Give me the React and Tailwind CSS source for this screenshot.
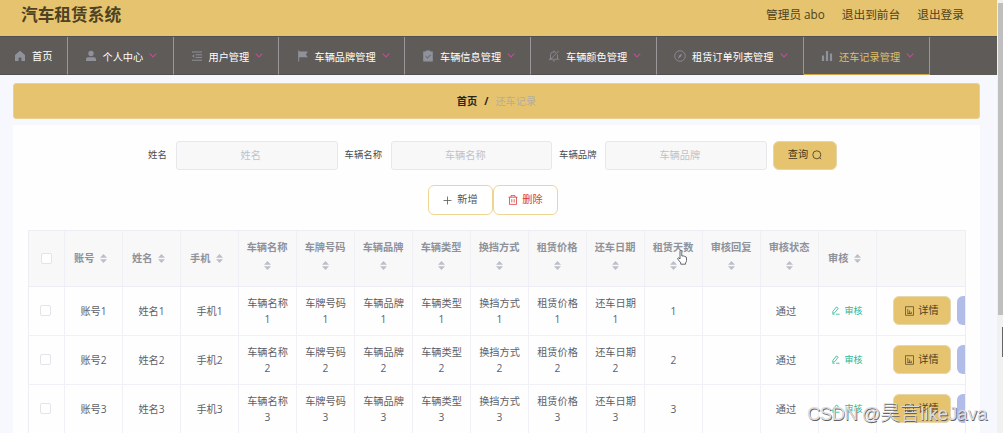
import clsx from 'clsx';

const navItems = [
    { label: '首页', icon: 'home', width: 'w-[68px]', pad: 'pl-[14px]', arrow: false },
    { label: '个人中心', icon: 'user', width: 'w-[106px]', pad: 'pl-[16.5px]', arrow: true },
    { label: '用户管理', icon: 'fold', width: 'w-[105px]', pad: 'pl-[16.5px]', arrow: true },
    { label: '车辆品牌管理', icon: 'flag', width: 'w-[126px]', pad: 'pl-[17.5px]', arrow: true },
    { label: '车辆信息管理', icon: 'claim', width: 'w-[126px]', pad: 'pl-[17px]', arrow: true },
    { label: '车辆颜色管理', icon: 'bell', width: 'w-[126px]', pad: 'pl-[17px]', arrow: true },
    { label: '租赁订单列表管理', icon: 'compass', width: 'w-[147px]', pad: 'pl-[17px]', arrow: true },
    { label: '还车记录管理', icon: 'data', width: 'w-[126px]', pad: 'pl-[17px]', arrow: true, active: true },
];

const searchFields = ['姓名', '车辆名称', '车辆品牌'];

const columns = [
    { title: '账号', field: true },
    { title: '姓名', field: true },
    { title: '手机', field: true },
    { title: '车辆名称', field: true, tall: true },
    { title: '车牌号码', field: true, tall: true },
    { title: '车辆品牌', field: true, tall: true },
    { title: '车辆类型', field: true, tall: true },
    { title: '换挡方式', field: true, tall: true },
    { title: '租赁价格', field: true, tall: true },
    { title: '还车日期', field: true, tall: true },
    { title: '租赁天数', tall: true },
    { title: '审核回复', tall: true },
    { title: '审核状态', tall: true },
    { title: '审核' },
];

const rows = [1, 2, 3];

const NavIcon = ({ name }) => (
    <svg className="w-3 h-3 shrink-0 text-[#8f929b]" viewBox="0 0 12 12" fill="none" stroke="currentColor" strokeWidth="1">
        {name === 'home' && <path fill="currentColor" stroke="none" d="M6 .8 11 5v6H7.4V7.4H4.6V11H1V5z" />}
        {name === 'user' && (
            <g fill="currentColor" stroke="none">
                <circle cx="6" cy="3.5" r="2.7" />
                <path d="M1 11V9.2Q1 7.3 3 7.3h6q2 0 2 1.9V11z" />
            </g>
        )}
        {name === 'fold' && (
            <>
                <path d="M1 2h10M4.5 4.8H11M4.5 7.4H11M1 10.2h10" />
                <path fill="currentColor" stroke="none" d="M1 6.1 3.2 4.5v3.2z" />
            </>
        )}
        {name === 'flag' && <path fill="currentColor" stroke="none" d="M1.2.5h1v1h8.6L8.9 4.4l1.9 2.9H2.2v4.2h-1z" />}
        {name === 'claim' && (
            <>
                <path fill="currentColor" stroke="none" d="M1.2 1.5H3.8V.5h4.4v1h2.6v10H1.2z" />
                <path stroke="#5e5b59" d="m3.6 6.2 1.9 1.8 3.1-3.1" />
            </>
        )}
        {name === 'bell' && (
            <path strokeWidth=".8" d="M2.5 9V5Q2.5 1.8 6 1.8q1.2 0 2 .6M9.5 4.5V9M.8 9.2h10.4M4.8 10.9h2.4M10.6 1 1.8 10.2M6 .6v1" />
        )}
        {name === 'compass' && (
            <>
                <circle cx="6" cy="6" r="5.3" strokeWidth=".8" />
                <path fill="currentColor" stroke="none" d="M8.3 3.2 6.7 6.7 3.8 8.8l1.5-3.4z" />
            </>
        )}
        {name === 'data' && <path strokeWidth="2.2" d="M2 11V5.5M6 11V1M10 11V3.5" />}
    </svg>
);

const SortCaret = () => (
    <svg className="w-[7px] h-[9px] shrink-0" viewBox="0 0 7 9" fill="#bcbfc7">
        <path d="M3.5 0 7 3.8H0zM3.5 9 0 5.2h7z" />
    </svg>
);

const Checkbox = ({ className }) => (
    <span className={clsx('block w-[11px] h-[11px] rounded-[2px] border border-[#e2e4ea] bg-white', className)} />
);

const Header = () => (
    <header className="flex h-9 items-start justify-between bg-[#e6c46f] pl-[21px] pr-[33px] text-[#4d4223]">
        <h1 className="mt-[3px] text-[16.7px] leading-6 font-bold">汽车租赁系统</h1>
        <div className="mt-[4px] flex gap-[17px] text-[11.7px] leading-5">
            <span>管理员 abo</span>
            <span>退出到前台</span>
            <span>退出登录</span>
        </div>
    </header>
);

const Nav = () => (
    <nav className="flex h-[39px] bg-[#5e5b59] border-t border-[#55504f]">
        {navItems.map((item) => (
            <div
                key={item.label}
                className={clsx(
                    'flex shrink-0 items-center whitespace-nowrap border-r border-r-[#99979a] pt-px text-[10.2px] leading-4',
                    item.width,
                    item.pad,
                    item.active ? 'border-b border-b-[#d6a445] text-[#e0be6c]' : 'border-b border-b-[#55504f] text-white'
                )}
            >
                <NavIcon name={item.icon} />
                <span className={clsx('ml-[6px]', item.arrow && 'pt-px')}>{item.label}</span>
                {item.arrow && (
                    <svg className="ml-[6px] mb-[2px] w-[8px] h-[5px] shrink-0" viewBox="0 0 8 5" fill="none" stroke="#bd5092" strokeWidth="1.1">
                        <path d="m.7.7 3.3 3.2L7.3.7" />
                    </svg>
                )}
            </div>
        ))}
    </nav>
);

const SearchForm = () => (
    <div className="flex h-[29px] items-center pl-[135px] text-[9.4px] text-[#4a4c50]">
        {searchFields.map((name) => (
            <label key={name} className="flex items-center whitespace-nowrap">
                <span className={clsx('mr-2', name === '姓名' ? 'w-[20px]' : 'w-[38px]')}>{name}</span>
                <input
                    className="mr-[7px] h-[29px] w-[161.5px] rounded-[3px] border border-[#e6e8ec] bg-[#f8f8f8] pr-3 text-center text-[10.2px] placeholder:text-[#bfc2c9]"
                    placeholder={name}
                />
            </label>
        ))}
        <button className="-ml-[0.5px] flex h-[29px] w-[64px] items-center justify-center gap-[4px] rounded-[6px] border border-[#e6d5a6] bg-[#e6c46f] text-[10.2px] text-[#40371d]">
            查询
            <svg className="w-[10px] h-[10px]" viewBox="0 0 10 10" fill="none" stroke="currentColor" strokeWidth=".8">
                <circle cx="4.8" cy="4.8" r="4" />
                <path d="m7.5 7.6 1.6 1.6" />
            </svg>
        </button>
    </div>
);

const Actions = () => (
    <div className="mt-[15px] flex pl-[415px] text-[10.2px]">
        <button className="flex h-[30px] w-[65px] items-center justify-center gap-[5px] rounded-[6px] border border-[#eed692] bg-white pt-px text-[#55575c]">
            <svg className="w-[9px] h-[9px]" viewBox="0 0 9 9" stroke="currentColor" strokeWidth=".8">
                <path d="M4.5.5v8M.5 4.5h8" />
            </svg>
            新增
        </button>
        <button className="flex h-[30px] w-[65px] items-center justify-center gap-[4px] rounded-[6px] border border-[#eed692] bg-white pt-px text-[#d93a3a]">
            <svg className="w-[10px] h-[10px]" viewBox="0 0 10 10" fill="none" stroke="currentColor" strokeWidth=".8">
                <path d="M.5 2.2h9M3 2V.6h4V2M1.5 2.2v7.2h7V2.2M3.8 4.2v3.3M6.2 4.2v3.3" />
            </svg>
            删除
        </button>
    </div>
);

const TableHead = () => (
    <div className="flex h-[56px] border-b border-[#ededf5] bg-[#f8f8f9] font-bold text-[#8f9299]">
        <div className="flex w-[36px] shrink-0 items-center justify-center border-r border-[#efeff6]">
            <Checkbox />
        </div>
        {columns.map((col) => (
            <div
                key={col.title}
                className={clsx(
                    'flex w-[58px] shrink-0 border-r border-[#efeff6]',
                    col.tall ? 'flex-col items-center pt-[7px] pr-px' : 'items-center pl-[9px]'
                )}
            >
                <span className="leading-[18px]">{col.title}</span>
                <span className={col.tall ? 'mt-[5px]' : 'ml-[6px]'}>
                    <SortCaret />
                </span>
            </div>
        ))}
    </div>
);

const TableRow = ({ n }) => (
    <div className="flex h-[49px] border-b border-[#f0f0f6] text-[#5d6067]">
        <div className="flex w-[36px] shrink-0 items-center justify-center border-r border-[#f0f0f6]">
            <Checkbox className="-ml-[2px]" />
        </div>
        {columns.map((col) => (
            <div
                key={col.title}
                className="flex w-[58px] shrink-0 items-center justify-center border-r border-[#f0f0f6] px-[8px] text-center leading-4"
            >
                {col.field && !col.tall && `${col.title}${n}`}
                {col.field && col.tall && <span>{col.title}<br />{n}</span>}
                {col.title === '租赁天数' && n}
                {col.title === '审核状态' && <span className="-ml-[7px]">通过</span>}
                {col.title === '审核' && (
                    <span className="flex items-center gap-[4px] text-[9px] text-[#2fb491]">
                        <svg className="w-[8px] h-[9px]" viewBox="0 0 9 10" fill="none" stroke="currentColor" strokeWidth=".9">
                            <path d="M1 6 5 1l2 1.5-4 5-2.2.7zM.5 9.2H3m1.5 0h4" />
                        </svg>
                        审核
                    </span>
                )}
            </div>
        ))}
        <div className="flex shrink-0 items-center gap-[6px] pl-4">
            <button className="flex h-[29px] w-[58px] items-center justify-center gap-[4px] rounded-[6px] border border-[#e6d7ac] bg-[#e6c46f] text-[#4d4223]">
                <svg className="w-[9px] h-[10px]" viewBox="0 0 9 10" fill="none" stroke="currentColor" strokeWidth=".7">
                    <path d="M.5.7h8v8.6h-8zM2.8 3v4.5M4.6 4.5v3M6.3 5.8v1.7M2.4 7.5h4.2" />
                </svg>
                详情
            </button>
            <button className="h-[29px] w-[58px] rounded-[6px] bg-[#b1bce9]" />
        </div>
    </div>
);

const App = () => {
    return (
        <div className="relative flex h-[433px] w-[1003px] overflow-hidden bg-[#f7f8fd] font-['Open_Sans','Noto_Sans_CJK_SC',sans-serif]">
            <div className="w-[997px] shrink-0">
                <Header />
                <Nav />
                <main className="ml-[13px] w-[967px] pt-2">
                    <div className="flex h-9 items-center justify-center rounded-[3px] border border-[#e9d193] bg-[#e6c46f] pt-px text-[10.2px]">
                        <span className="font-bold text-[#29241a]">首页</span>
                        <span className="mx-[7px] font-bold text-[#29241a]">/</span>
                        <span className="text-[#b4ad9c]">还车记录</span>
                    </div>
                    <section className="mt-[6px] h-[320px] bg-[#fefefe] pt-[15.5px]">
                        <SearchForm />
                        <Actions />
                        <div className="ml-[15px] mt-[15px] w-[938px] overflow-hidden border border-[#ededf5] text-[10.2px]">
                            <TableHead />
                            {rows.map((n) => (
                                <TableRow key={n} n={n} />
                            ))}
                        </div>
                    </section>
                </main>
            </div>

            {/* page scrollbar */}
            <div className="flex w-[6px] shrink-0 flex-col bg-[#f1f1f2] pl-px pt-[3px]">
                <div className="h-[312px] bg-[#bfbfc0]" />
                <div className="mt-[12px] ml-[4px] h-[30px] w-px bg-[#66666a]" />
            </div>

            {/* hand pointer */}
            <svg className="absolute left-[677px] top-[250px] h-[15px] w-[10px]" viewBox="0 0 10 15" fill="#fff" stroke="#55565a" strokeWidth=".9">
                <path d="M3 9V1.5q0-1 .9-1t.9 1V6q2-.3 3 .4 1.7.2 1.7 1.6v2.5q0 1.5-1 2.4v1.3H3.8v-1.3L1 9.4q-.7-1.2.2-1.6Q2 7.6 3 9z" />
            </svg>

            {/* watermark */}
            <div className="absolute left-[807px] top-[400px] flex items-baseline whitespace-nowrap font-['Liberation_Sans','Noto_Sans_CJK_SC',sans-serif] text-[18.6px] font-light leading-[26px] text-[#dcdcde] [text-shadow:0.7px_0.7px_0_#636366]">
                <span className="tracking-[-0.6px]">CSDN @</span>
                <span className="text-[20px]">昊言</span>
                <span>likeJava</span>
            </div>
        </div>
    );
};

export default App;
